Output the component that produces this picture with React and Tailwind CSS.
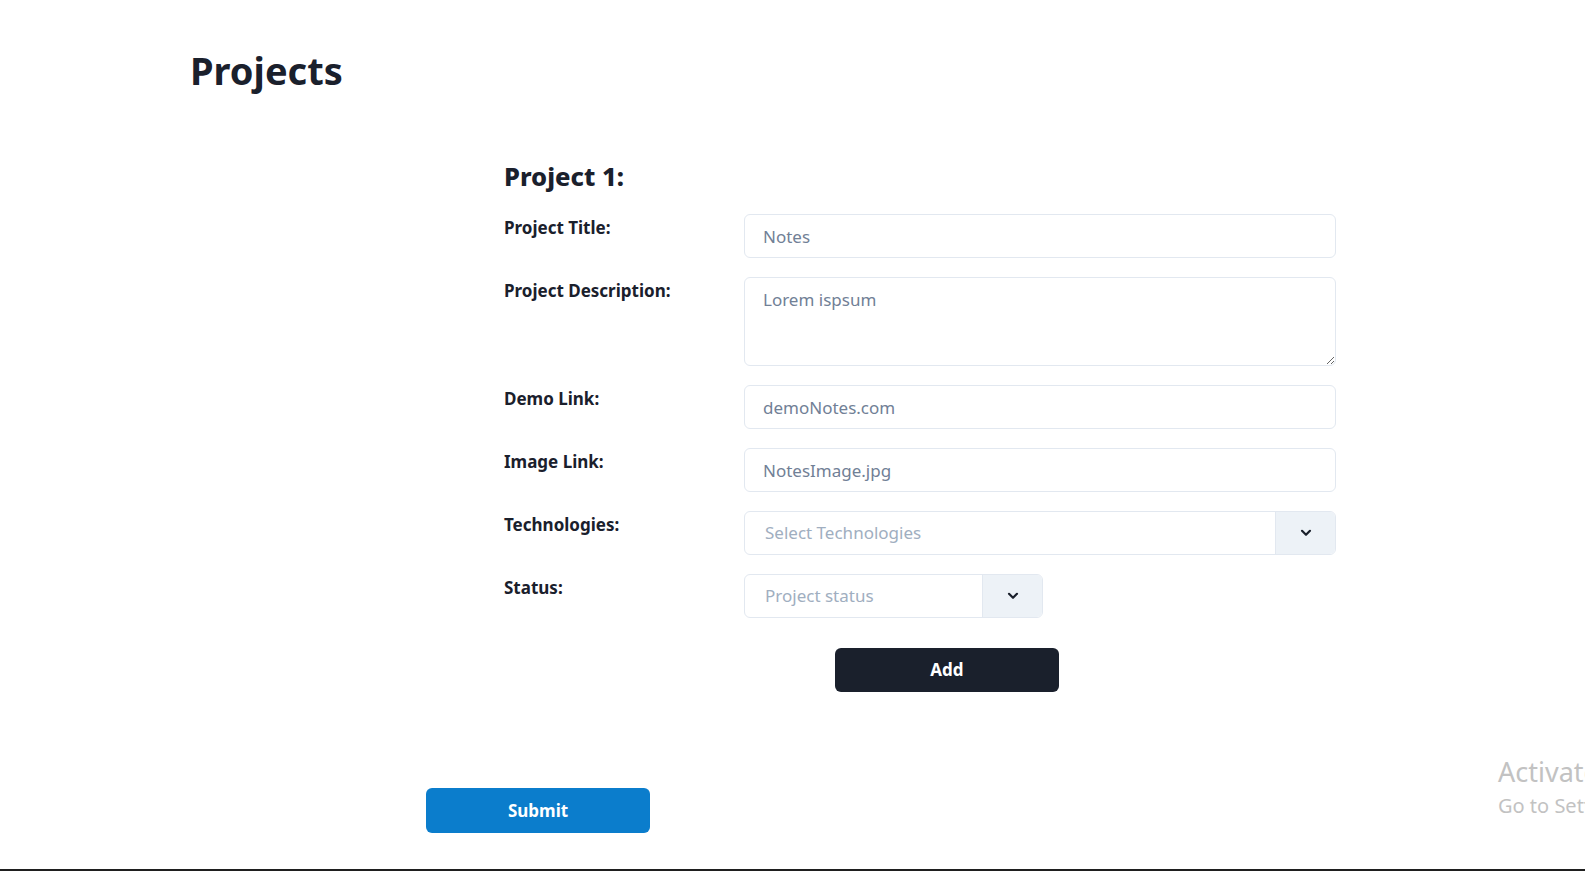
import React from "react";

function Chevron() {
  return (
    <svg width="12" height="8" viewBox="0 0 12 8" fill="none">
      <path d="M2 1.8 L6 5.8 L10 1.8" stroke="#1a202c" strokeWidth="2.2" strokeLinecap="round" strokeLinejoin="round" />
    </svg>
  );
}

function Label({ children }) {
  return <label className="pt-[2px] text-[17px] leading-6 font-bold text-[#1a202c]">{children}</label>;
}

function TextInput({ value }) {
  return (
    <input
      defaultValue={value}
      className="h-11 w-full rounded-md border border-[#e2e8f0] bg-white px-[18px] text-[17px] text-[#718096] outline-none"
    />
  );
}

function SelectBox({ placeholder, width }) {
  return (
    <div className={`flex h-11 ${width} overflow-hidden rounded-md border border-[#e2e8f0] bg-white`}>
      <div className="flex flex-1 items-center px-5 text-[17px] text-[#a0aec0]">{placeholder}</div>
      <div className="flex w-[60px] items-center justify-center border-l border-[#e2e8f0] bg-[#edf2f7]">
        <Chevron />
      </div>
    </div>
  );
}

export default function App() {
  return (
    <div className="relative flex min-h-screen flex-col overflow-hidden bg-white" style={{ fontFamily: '"Noto Sans", sans-serif' }}>
      <main className="flex-1">
        <h1 className="pl-[190px] pt-[51px] text-[38px] leading-none font-bold text-[#1a202c]">Projects</h1>

        <section className="ml-[504px] mt-[73px] w-[832px]">
          <h2 className="text-[25.5px] leading-[28px] font-extrabold text-[#1a202c]">Project 1:</h2>

          <div className="mt-6 flex flex-col gap-[19px]">
            <div className="grid grid-cols-[240px_1fr]">
              <Label>Project Title:</Label>
              <TextInput value="Notes" />
            </div>
            <div className="grid grid-cols-[240px_1fr]">
              <Label>Project Description:</Label>
              <textarea
                defaultValue="Lorem ispsum"
                className="block h-[89px] w-full rounded-md border border-[#e2e8f0] bg-white px-[18px] pt-[10px] text-[17px] leading-6 text-[#718096] outline-none"
              />
            </div>
            <div className="grid grid-cols-[240px_1fr]">
              <Label>Demo Link:</Label>
              <TextInput value="demoNotes.com" />
            </div>
            <div className="grid grid-cols-[240px_1fr]">
              <Label>Image Link:</Label>
              <TextInput value="NotesImage.jpg" />
            </div>
            <div className="grid grid-cols-[240px_1fr]">
              <Label>Technologies:</Label>
              <SelectBox placeholder="Select Technologies" width="w-full" />
            </div>
            <div className="grid grid-cols-[240px_1fr]">
              <Label>Status:</Label>
              <SelectBox placeholder="Project status" width="w-[299px]" />
            </div>
          </div>

          <button className="ml-[331px] mt-[30px] flex h-11 w-[224px] items-center justify-center rounded-md bg-[#1a202c] text-[17px] font-bold text-white">
            Add
          </button>
        </section>

        <button className="ml-[426px] mt-[96px] flex h-[45px] w-[224px] items-center justify-center rounded-md bg-[#0b7dcc] text-[17px] font-bold text-white">
          Submit
        </button>
      </main>

      <div className="h-[2px] w-full bg-[#1f1f1f]" />

      <div className="pointer-events-none absolute left-[1498px] top-[756px] whitespace-nowrap text-[#c2c2c2]">
        <div className="text-[27px] leading-[32px]">Activate Windows</div>
        <div className="mt-[4px] text-[20px] leading-[28px]">Go to Settings to activate Windows.</div>
      </div>
    </div>
  );
}
